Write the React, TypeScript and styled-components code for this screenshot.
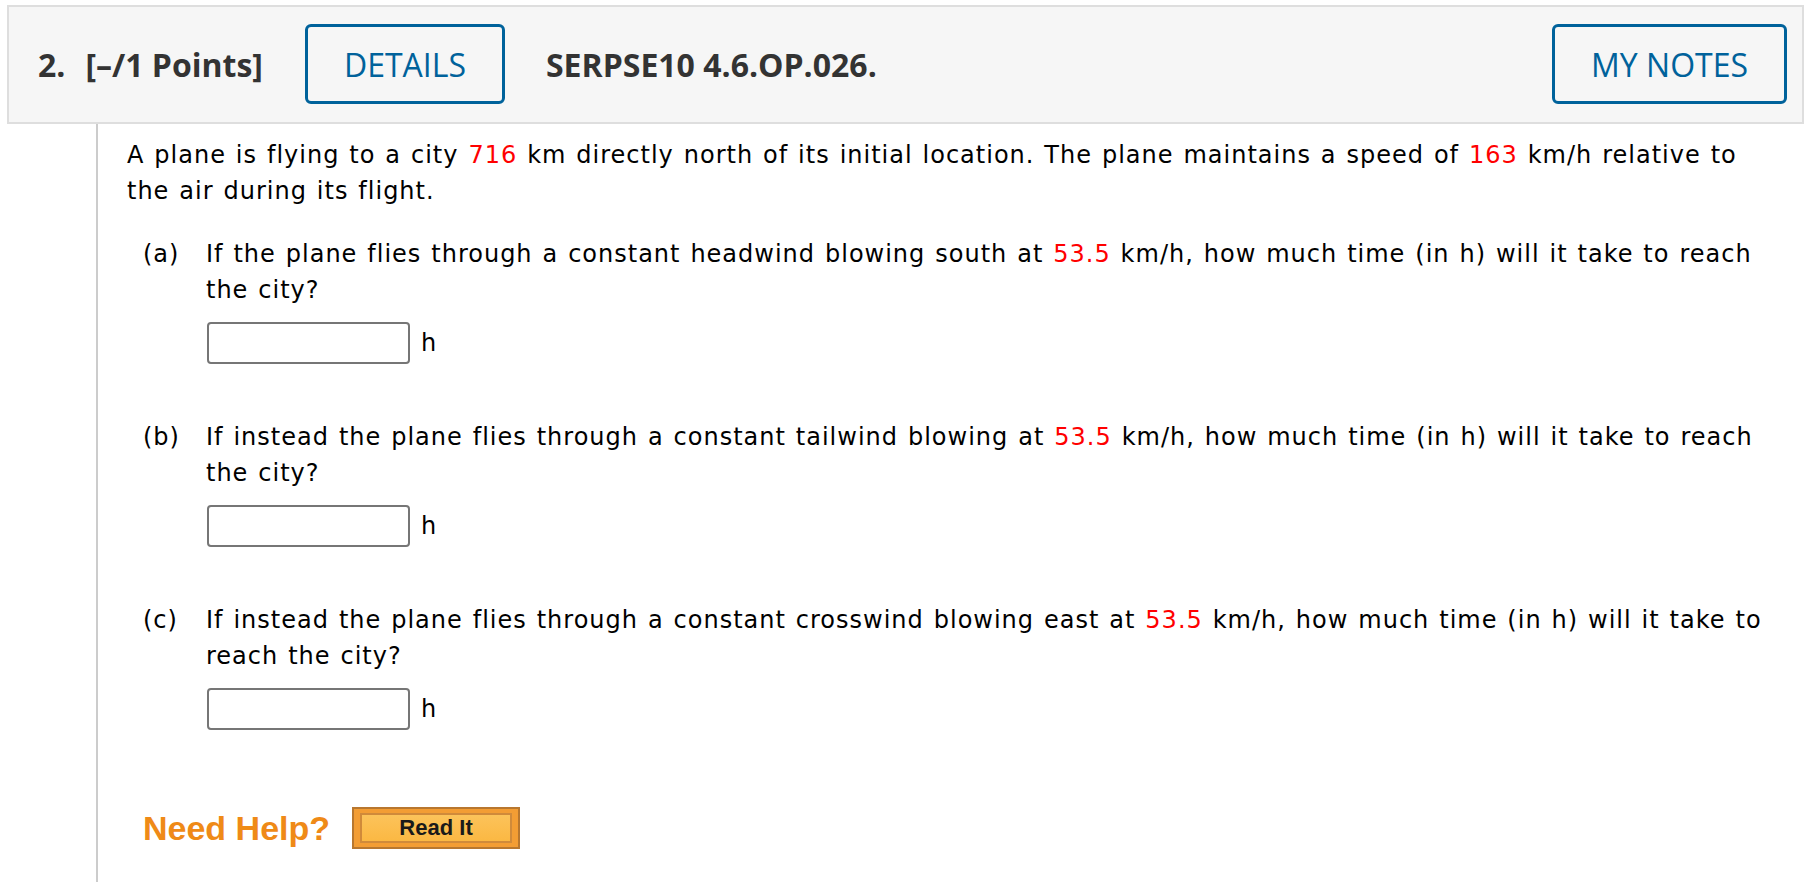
import React from "react";
import styled, {createGlobalStyle} from "styled-components";

const GlobalStyle = createGlobalStyle`
  html, body {
    margin: 0;
    padding: 0;
    background: #fff;
  }
  body {
    font-family: "DejaVu Sans", Verdana, sans-serif;
    color: #000;
  }
`;

const Page = styled.div`
  padding: 5px 7px 0 7px;
  height: 877px;
  display: flex;
  flex-direction: column;
  overflow: hidden;
`;

const Header = styled.header`
  display: flex;
  align-items: center;
  background: #f6f6f6;
  border: 2px solid #dedede;
  padding: 17px 15px 18px 29px;
  font-family: "Open Sans", sans-serif;
  font-size: 32px;
`;

const QNum = styled.span`
  font-weight: 700;
  color: #333;
  margin-right: 20px;
`;

const Points = styled.span`
  font-weight: 700;
  color: #333;
  margin-right: 42px;
`;

const HeaderButton = styled.button<{$push?: boolean}>`
  font-family: "Open Sans", sans-serif;
  font-size: 32px;
  color: #00629b;
  background: transparent;
  border: 3px solid #00629b;
  border-radius: 6px;
  height: 80px;
  padding: 0 36px;
  margin-left: ${(p) => (p.$push ? "auto" : "0")};
  cursor: pointer;
`;

const Code = styled.span`
  font-weight: 700;
  color: #333;
  margin-left: 41px;
`;

const Body = styled.div`
  flex: 1;
  margin-left: 89px;
  border-left: 2px solid #cccccc;
  padding: 13px 0 0 29px;
  width: 1655px;
  font-size: 24px;
  line-height: 36px;
  letter-spacing: 1px;
  word-spacing: 1.3px;
`;

const Intro = styled.p`
  margin: 0 0 27px 0;
`;

const Red = styled.span`
  color: #ff0000;
`;

const Part = styled.div`
  display: grid;
  grid-template-columns: 79px 1fr;
  margin-bottom: 55px;
`;

const PartLabel = styled.div`
  padding-left: 16px;
`;

const PartText = styled.div``;

const AnswerRow = styled.div`
  display: flex;
  align-items: center;
  gap: 11px;
  margin-top: 14px;
  margin-left: 1px;
`;

const AnswerInput = styled.input`
  width: 203px;
  height: 42px;
  box-sizing: border-box;
  border: 2px solid #767676;
  border-radius: 4px;
  background: #fff;
  font-size: 22px;
`;

const Unit = styled.span`
  font-size: 24px;
  letter-spacing: 0;
`;

const HelpRow = styled.div`
  display: flex;
  align-items: center;
  gap: 22px;
  margin-top: 77px;
  padding-left: 16px;
  letter-spacing: 0;
  word-spacing: 0;
`;

const NeedHelp = styled.span`
  font-family: "Liberation Sans", Arial, sans-serif;
  font-weight: 700;
  font-size: 34px;
  color: #ef8a17;
`;

const ReadIt = styled.button`
  width: 168px;
  height: 42px;
  box-sizing: border-box;
  border: 2px solid #b8772f;
  background: #f39d34;
  padding: 4px 6px;
  cursor: pointer;
`;

const ReadItInner = styled.span`
  display: flex;
  align-items: center;
  justify-content: center;
  height: 100%;
  box-sizing: border-box;
  border: 2px solid #d08a3a;
  background: linear-gradient(#fcc35a, #fbb843);
  font-family: "Liberation Sans", Arial, sans-serif;
  font-weight: 700;
  font-size: 22px;
  color: #1a1a1a;
`;

type PartData = {
    label: string;
    before: string;
    value: string;
    after: string;
};

const parts: PartData[] = [
    {
        label: "(a)",
        before: "If the plane flies through a constant headwind blowing south at ",
        value: "53.5",
        after: " km/h, how much time (in h) will it take to reach the city?",
    },
    {
        label: "(b)",
        before: "If instead the plane flies through a constant tailwind blowing at ",
        value: "53.5",
        after: " km/h, how much time (in h) will it take to reach the city?",
    },
    {
        label: "(c)",
        before: "If instead the plane flies through a constant crosswind blowing east at ",
        value: "53.5",
        after: " km/h, how much time (in h) will it take to reach the city?",
    },
];

const App = () => {
    return (
        <Page>
            <GlobalStyle />
            <Header>
                <QNum>2.</QNum>
                <Points>[–/1 Points]</Points>
                <HeaderButton>DETAILS</HeaderButton>
                <Code>SERPSE10 4.6.OP.026.</Code>
                <HeaderButton $push>MY NOTES</HeaderButton>
            </Header>
            <Body>
                <Intro>
                    A plane is flying to a city <Red>716</Red> km directly north of its initial location.
                    The plane maintains a speed of <Red>163</Red> km/h relative to the air during its flight.
                </Intro>
                {parts.map((part) => (
                    <Part key={part.label}>
                        <PartLabel>{part.label}</PartLabel>
                        <PartText>
                            {part.before}
                            <Red>{part.value}</Red>
                            {part.after}
                            <AnswerRow>
                                <AnswerInput type="text" />
                                <Unit>h</Unit>
                            </AnswerRow>
                        </PartText>
                    </Part>
                ))}
                <HelpRow>
                    <NeedHelp>Need Help?</NeedHelp>
                    <ReadIt>
                        <ReadItInner>Read It</ReadItInner>
                    </ReadIt>
                </HelpRow>
            </Body>
        </Page>
    );
};

export default App;
